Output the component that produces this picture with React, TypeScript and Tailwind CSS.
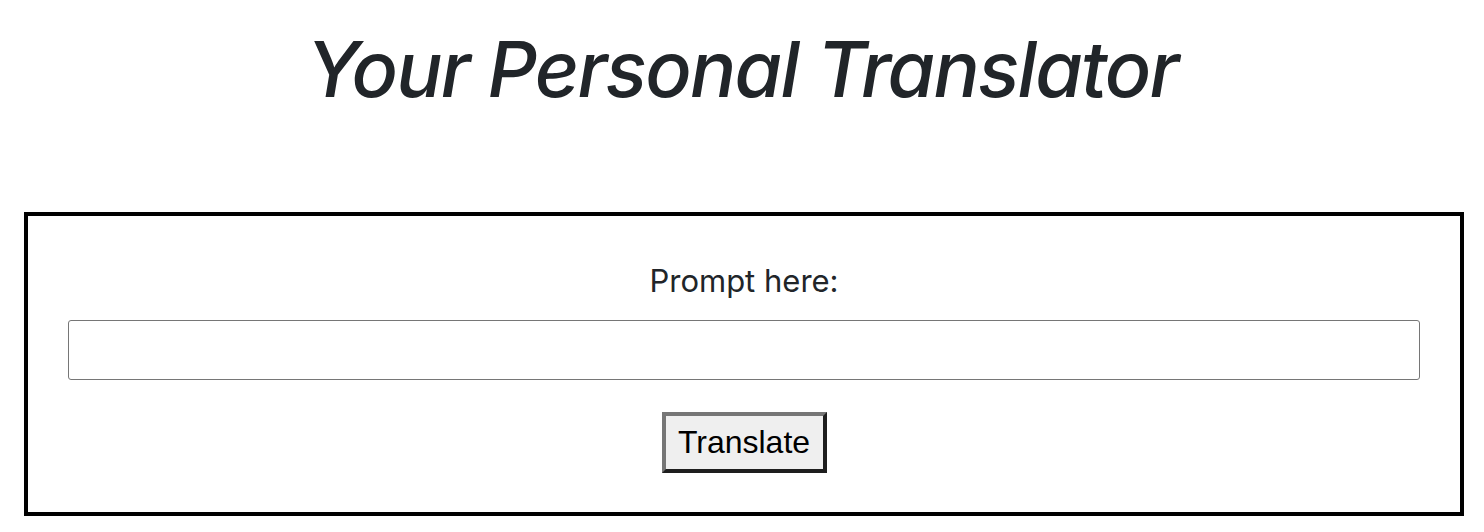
export default function App() {
  return (
    <div className="min-h-[532px] bg-white font-['Inter','Noto_Sans',sans-serif] text-[#212529]">
      {/* Heading */}
      <h1 className="pt-[21px] text-center text-[77px] leading-[96px] font-medium tracking-[-1.8px] italic">
        Your Personal Translator
      </h1>

      {/* Translator box */}
      <div className="mt-[95px] ml-[24px] w-[1440px] border-4 border-black px-10 pt-[44px] pb-[39px]">
        <label
          htmlFor="prompt"
          className="block text-center text-[31px] leading-[42px]"
        >
          Prompt here:
        </label>
        <input
          id="prompt"
          type="text"
          className="mt-[18px] block h-[60px] w-full rounded-[3px] border border-[#767676] bg-white px-2 text-[20px] outline-none"
        />
        <div className="mt-8 flex justify-center">
          <button
            type="button"
            className="flex h-[61px] w-[165px] items-center justify-center border-4 border-t-[#767676] border-l-[#767676] border-r-[#1e1e1e] border-b-[#1e1e1e] bg-[#efefef] font-['Liberation_Sans',Arial,sans-serif] text-[32px] leading-[37px] text-black"
          >
            Translate
          </button>
        </div>
      </div>
    </div>
  );
}
